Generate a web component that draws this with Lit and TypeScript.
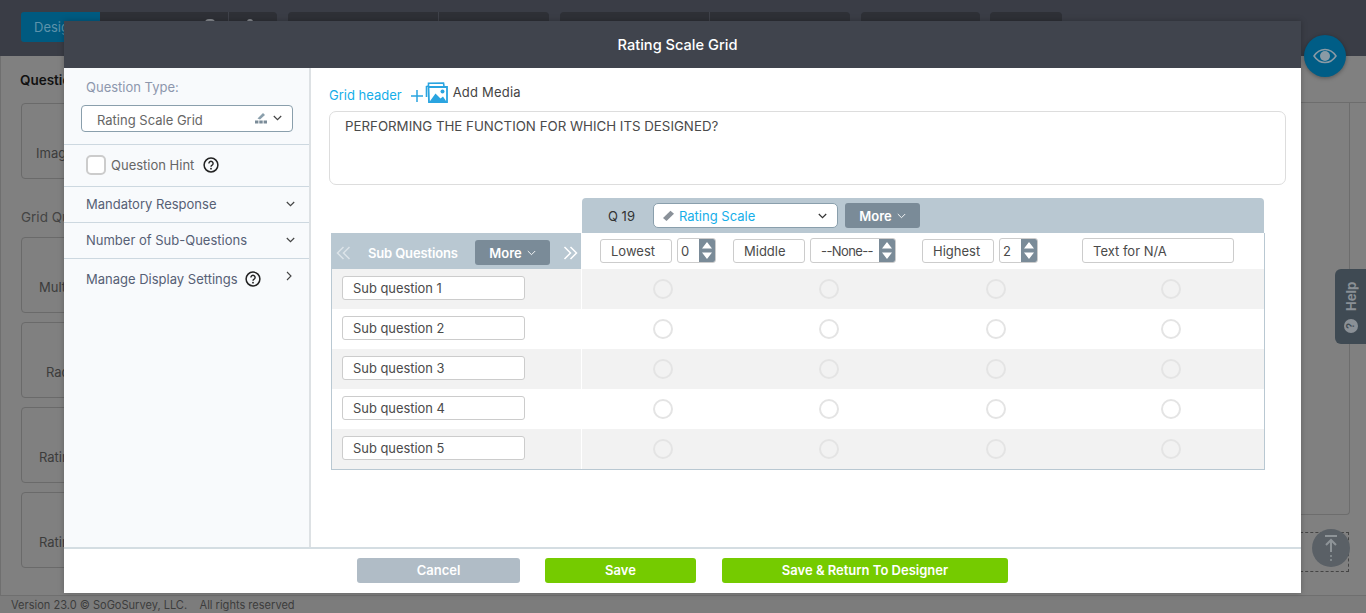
import { LitElement, html, css } from "lit";
import { customElement } from "lit/decorators.js";

const chev = (c = "#444", w = 9, sw = 1.2) => html`<svg class="chev" width="${w}" height="6" viewBox="0 0 9 6"><path d="M.8 1l3.7 3.7L8.2 1" fill="none" stroke="${c}" stroke-width="${sw}"/></svg>`;
const help = html`<svg width="16" height="16" viewBox="0 0 16 16"><circle cx="8" cy="8" r="6.9" fill="none" stroke="#222" stroke-width="1.5"/><path d="M5.9 6.4a2.1 2.1 0 1 1 3.2 1.8c-.7.4-1.1.8-1.1 1.6" fill="none" stroke="#222" stroke-width="1.4"/><circle cx="8" cy="11.7" r=".9" fill="#222"/></svg>`;
const spin = html`<span class="spin"><svg width="10" height="17" viewBox="0 0 10 17"><path d="M5 0l5 6.5H0zM5 17l-5-6.5h10z" fill="#fff"/></svg></span>`;
const dbl = (flip: boolean) => html`<svg class="dbl" width="15" height="14" viewBox="0 0 15 14" style="transform:scaleX(${flip ? -1 : 1})"><path d="M7.5 1L1.5 7l6 6M13.5 1l-6 6 6 6" fill="none" stroke="currentColor" stroke-width="1.5"/></svg>`;

@customElement("app-root")
export class AppRoot extends LitElement {
  static styles = css`
    :host { display:block; position:relative; width:1366px; height:613px; overflow:hidden; font-family:Inter,"Liberation Sans",sans-serif; font-size:13px; color:#4a4a4a; background:#808080; }
    * { box-sizing:border-box; }
    .top { height:56px; background:#3a3d46; padding:12px 0 0 21px; display:flex; }
    .tab.design { height:30px; width:79px; background:#005a80; color:#5d93ab; border-radius:3px 0 0 3px; padding:7px 0 0 13px; font-size:13px; }
    .seg { height:30px; background:#2e3036; border-left:1px solid #3f424a; position:relative; }
    .seg i { position:absolute; top:7px; width:10px; height:4px; border-radius:5px 5px 0 0; background:#83868c; }
    .grp { display:flex; border-radius:0 4px 4px 0; overflow:hidden; margin-right:11px; }
    .grp.r { border-radius:4px; }
    .seg:first-child { border-left:none; }
    .page { display:flex; height:539px; border-left:1px solid #6f6f6f; }
    .col { width:1300px; padding:16px 0 0 20px; color:#3d3d3d; flex:none; }
    .side { flex:1; border-top:1px solid #6d6d6d; margin-top:46px; position:relative; }
    .sbox { height:412px; width:49px; border-right:1px solid #6d6d6d; border-bottom:1px solid #6d6d6d; border-radius:0 0 4px 0; }
    .h { font-size:13.5px; font-weight:600; color:#111; height:31px; margin-left:-1px; }
    .h2 { color:#444; font-weight:400; height:28px; margin:30px 0 0; }
    .box { width:60px; height:76px; border:1px solid #6a6a6a; border-radius:4px; margin-bottom:9px; display:flex; align-items:center; padding-top:24px; font-size:13px; color:#3c3c3c; overflow:hidden; }
    .box span { margin-left:var(--i,0); white-space:nowrap; }
    .foot { height:18px; background:#7c7c7c; border-top:1px solid #6f6f6f; font-size:11.05px; color:#3c3c3c; padding:2px 0 0 11px; white-space:pre; }

    .dash { position:absolute; left:1295px; top:532px; width:54px; height:40px; border:1px dashed #444; }
    .up { position:absolute; left:1312px; top:529px; width:38px; height:38px; border-radius:50%; background:#5a6066; display:flex; align-items:center; justify-content:center; }
    .eye { position:absolute; left:1304px; top:35px; width:42px; height:42px; border-radius:50%; background:#005d86; display:flex; align-items:center; justify-content:center; box-shadow:0 1px 4px rgba(0,0,0,.35); }
    .helpt { position:absolute; left:1335px; top:269px; width:31px; height:75px; border-radius:6px 0 0 6px; background:#3f4a53; color:#8a9096; }
    .helpt b { position:absolute; left:-1px; top:12px; width:33px; height:30px; writing-mode:vertical-rl; transform:rotate(180deg); font-size:13px; font-weight:700; display:flex; align-items:center; justify-content:center; }
    .helpt i { position:absolute; left:9px; top:50px; width:14px; height:14px; border-radius:50%; background:#8a9096; color:#3f4a53; font:700 10px/14px "Liberation Sans",sans-serif; text-align:center; transform:rotate(-90deg); }

    .modal { position:absolute; left:64px; top:21px; width:1237px; height:572px; background:#fff; display:flex; flex-direction:column; box-shadow:0 0 6px rgba(0,0,0,.25); }
    .mh { height:47px; background:#40444d; color:#fff; font-size:14.6px; font-weight:500; display:flex; align-items:center; justify-content:center; flex:none; padding-right:10px; }
    .mb { flex:1; display:flex; min-height:0; }
    .left { width:247px; background:#f8fafc; border-right:2px solid #dde1e4; flex:none; color:#566075; }
    .qt { height:77px; padding:11px 16px 0 17px; border-bottom:1px solid #cdd8e0; }
    .qt label { display:block; color:#8d97ad; margin-left:5px; height:26px; line-height:16px; }
    .sel { height:27px; border:1px solid #8a9fac; border-radius:4px; background:#fff; display:flex; align-items:center; padding:2px 10px 0 15px; color:#666; justify-content:space-between; }
    .sel .r { display:flex; align-items:center; gap:6px; margin-top:-3px; }
    .row { display:flex; align-items:center; padding:0 14px 2px 22px; border-bottom:1px solid #cdd8e0; height:36px; justify-content:space-between; white-space:nowrap; }
    .hint { height:42px; justify-content:flex-start; color:#666; }
    .cb { width:20px; height:20px; border:2px solid #ccc; border-radius:5px; background:#fff; margin-right:5px; }
    .hint svg { margin-left:9px; }
    .row.last { border:none; height:42px; }
    .row .l { display:flex; align-items:center; gap:7px; }
    .main { flex:1; padding:14px 15px 0 18px; min-width:0; }
    .gh { display:flex; align-items:flex-start; height:29px; }
    .gh a { color:#16aee9; margin-top:5px; }
    .gh .plus { margin:8px 2px 0 9px; }
    .gh .am { margin:2px 0 0 5px; color:#444; letter-spacing:.2px; }
    .ta { height:74px; border:1px solid #ddd; border-radius:7px; padding:6px 15px; color:#4a4a4a; font-size:13.3px; }
    .grid { margin:13px 21px 0 2px; }
    .band { margin-left:251px; width:682px; height:35px; background:#b9c8d2; border-radius:4px 4px 0 0; display:flex; align-items:center; padding:0 0 0 26px; color:#333; }
    .band .q { width:45px; }
    .rs { width:185px; height:25px; background:#fff; border:1px solid #8a9fac; border-radius:5px; display:flex; align-items:center; padding:0 10px 0 8px; color:#16aee9; gap:4px; }
    .rs .chev { margin-left:auto; }
    .more { width:75px; height:25px; background:#7a8b98; border-radius:3px; color:#fff; font-weight:600; display:flex; align-items:center; justify-content:center; gap:5px; }
    .band .more { margin-left:7px; }
    .tbl { border:1px solid #b9c8d2; border-top:none; display:grid; grid-template-columns:250px 162px 170px 164px 186px; width:934px; }
    .sh { height:36px; background:#b9c8d2; color:#fff; font-weight:600; display:flex; align-items:center; padding:3px 3px 0 4px; border-right:1px solid #fff; }
    .sh .t { margin-left:17px; width:107px; white-space:nowrap; letter-spacing:-.15px; }
    .sh .dbl:first-child { color:#dbe3e8; }
    .sh .dbl:last-child { margin-left:auto; }
    .hc { display:flex; align-items:flex-start; padding-top:5px; gap:5px; height:36px; }
    .hc.a { padding-left:18px; }
    .hc.b { margin-left:-11px; }
    .hc.c { padding-left:8px; }
    .hc.d { padding-left:4px; }
    .inp { height:24px; border:1px solid #ccc; border-radius:3px; padding:0 10px; display:flex; align-items:center; background:#fff; white-space:nowrap; margin-top:1px; }
    .w72 { width:72px; }
    .na { width:152px; height:25px; margin-top:0; }
    .num { height:25px; border:1px solid #ccc; border-radius:3px; display:flex; justify-content:space-between; align-items:stretch; padding-left:3px; overflow:hidden; background:#fff; white-space:nowrap; flex:none; }
    .num.w39 { width:39px; }
    .num.w86 { width:86px; padding-left:10px; letter-spacing:-.6px; }
    .num span:first-child { align-self:center; }
    .spin { width:16px; background:#7a8b98; display:flex; align-items:center; justify-content:center; flex:none; }
    .sq { height:40px; display:flex; align-items:center; padding:0 0 2px 10px; border-right:1px solid #fff; }
    .sq div { width:183px; height:24px; border:1px solid #ccc; border-radius:3px; background:#fff; padding:0 10px; display:flex; align-items:center; font-size:12.9px; }
    .rc { height:40px; display:flex; align-items:center; justify-content:center; }
    .shade { background:#f2f2f2; }
    .rad { width:20px; height:20px; border:2px solid #e4e4e4; border-radius:50%; }
    .mf { height:46px; flex:none; border-top:2px solid #d4dde2; display:flex; align-items:center; padding:0 0 1px 293px; }
    .btn { height:25px; border-radius:3px; color:#fff; font-weight:600; font-size:13px; display:flex; align-items:center; justify-content:center; background:#75cb00; padding-bottom:2px; }
    .cancel { width:163px; background:#b0bcc6; margin-right:25px; }
    .save { width:151px; margin-right:26px; }
    .saver { width:286px; }
  `;

  render() {
    const rows = ["Sub question 1", "Sub question 2", "Sub question 3", "Sub question 4", "Sub question 5"];
    return html`
      <div class="top">
        <div class="tab design">Design</div>
        <div class="grp"><div class="seg" style="width:128px"><i style="left:105px"></i></div><div class="seg" style="width:49px"><i style="left:18px;width:6px"></i></div></div>
        <div class="grp r"><div class="seg" style="width:150px"></div><div class="seg" style="width:111px"></div></div>
        <div class="grp r"><div class="seg" style="width:149px"></div><div class="seg" style="width:141px"></div></div>
        <div class="grp r" style="margin-right:10px"><div class="seg" style="width:119px"></div></div>
        <div class="grp r"><div class="seg" style="width:72px"></div></div>
      </div>
      <div class="page">
        <div class="col">
          <div class="h">Question</div>
          <div class="box"><span style="--i:14px">Image</span></div>
          <div class="h h2">Grid Questions</div>
          <div class="box"><span style="--i:17px">Multi</span></div>
          <div class="box"><span style="--i:24px">Radio</span></div>
          <div class="box"><span style="--i:17px">Rating</span></div>
          <div class="box"><span style="--i:17px">Rating</span></div>
        </div>
        <div class="side"><div class="sbox"></div></div>
      </div>
      <div class="foot">Version 23.0 © SoGoSurvey, LLC.    All rights reserved</div>

      <div class="eye"><svg width="24" height="16" viewBox="0 0 24 16"><path d="M1 8c3-4.500 7-6.500 11-6.500S20 3.500 23 8c-3 4.500-7 6.500-11 6.500S4 12.500 1 8z" fill="none" stroke="#8a9aa5" stroke-width="1.500"/><circle cx="12" cy="8" r="5" fill="#8a9aa5"/></svg></div>
      <div class="helpt"><b>Help</b><i>?</i></div>
      <div class="dash"></div>
      <div class="up"><svg width="16" height="28" viewBox="0 0 16 28"><path d="M2 2h12M8 6v12M3 11l5-5 5 5" fill="none" stroke="#8e9498" stroke-width="2"/><circle cx="8" cy="22" r="1" fill="#8e9498"/><circle cx="8" cy="26" r="1" fill="#8e9498"/></svg></div>

      <div class="modal">
        <div class="mh">Rating Scale Grid</div>
        <div class="mb">
          <div class="left">
            <div class="qt"><label>Question Type:</label>
              <div class="sel"><span>Rating Scale Grid</span><span class="r"><svg width="12" height="12" viewBox="0 0 12 12"><path d="M2.500 6.500L8 1l2 2-5 4.500z" fill="#8a9fac"/><path d="M0 8.500h3.400v3H0zM4.300 8.500h3.400v3H4.300zM8.600 8.500H12v3H8.600z" fill="#7a8b98"/></svg>${chev()}</span></div>
            </div>
            <div class="row hint"><span class="cb"></span>Question Hint${help}</div>
            <div class="row">Mandatory Response ${chev()}</div>
            <div class="row">Number of Sub-Questions ${chev()}</div>
            <div class="row last"><span class="l">Manage Display Settings ${help}</span><svg width="6" height="10" viewBox="0 0 6 10" style="margin:-6px 3px 0 0"><path d="M1 1l4 4-4 4" fill="none" stroke="#444" stroke-width="1.100"/></svg></div>
          </div>
          <div class="main">
            <div class="gh"><a>Grid header</a>
              <svg class="plus" width="12" height="12" viewBox="0 0 12 12"><path d="M0 6h12M6 0v12" stroke="#2aa4e0" stroke-width="1.500"/></svg>
              <svg width="23" height="21" viewBox="0 0 23 21"><path d="M1.500 15V4.500L3.500 4V1.200l15-.2.500 3" fill="none" stroke="#2aa4e0" stroke-width="1.600"/><path d="M3.500 5h18.500v15.500H4z" fill="#fff" stroke="#2aa4e0" stroke-width="1.800"/><path d="M4 20.500l6.500-9 5 5 2.500-2 4 6z" fill="#2aa4e0"/><circle cx="17.500" cy="9.500" r="2" fill="#2aa4e0"/></svg>
              <span class="am">Add Media</span></div>
            <div class="ta">PERFORMING THE FUNCTION FOR WHICH ITS DESIGNED?</div>
            <div class="grid">
              <div class="band"><span class="q">Q 19</span>
                <div class="rs"><svg width="13" height="12" viewBox="0 0 13 12"><path d="M1 8L8.500 .8l3.500 3L4.500 11z" fill="#8a9199"/></svg>Rating Scale ${chev("#333")}</div>
                <div class="more">More ${chev("#fff", 9, 0.9)}</div>
              </div>
              <div class="tbl">
                <div class="sh">${dbl(false)}<span class="t">Sub Questions</span><div class="more">More ${chev("#fff", 9, 0.9)}</div>${dbl(true)}</div>
                <div class="hc a"><div class="inp w72">Lowest</div><div class="num w39"><span>0</span>${spin}</div></div>
                <div class="hc b"><div class="inp w72">Middle</div><div class="num w86"><span>--None--</span>${spin}</div></div>
                <div class="hc c"><div class="inp w72">Highest</div><div class="num w39"><span>2</span>${spin}</div></div>
                <div class="hc d"><div class="inp na">Text for N/A</div></div>
                ${rows.map((r, i) => html`
                  <div class="sq ${i % 2 ? "" : "shade"}"><div>${r}</div></div>
                  ${[0, 1, 2, 3].map(() => html`<div class="rc ${i % 2 ? "" : "shade"}"><span class="rad"></span></div>`)}
                `)}
              </div>
            </div>
          </div>
        </div>
        <div class="mf">
          <div class="btn cancel">Cancel</div><div class="btn save">Save</div><div class="btn saver">Save &amp; Return To Designer</div>
        </div>
      </div>
    `;
  }
}
